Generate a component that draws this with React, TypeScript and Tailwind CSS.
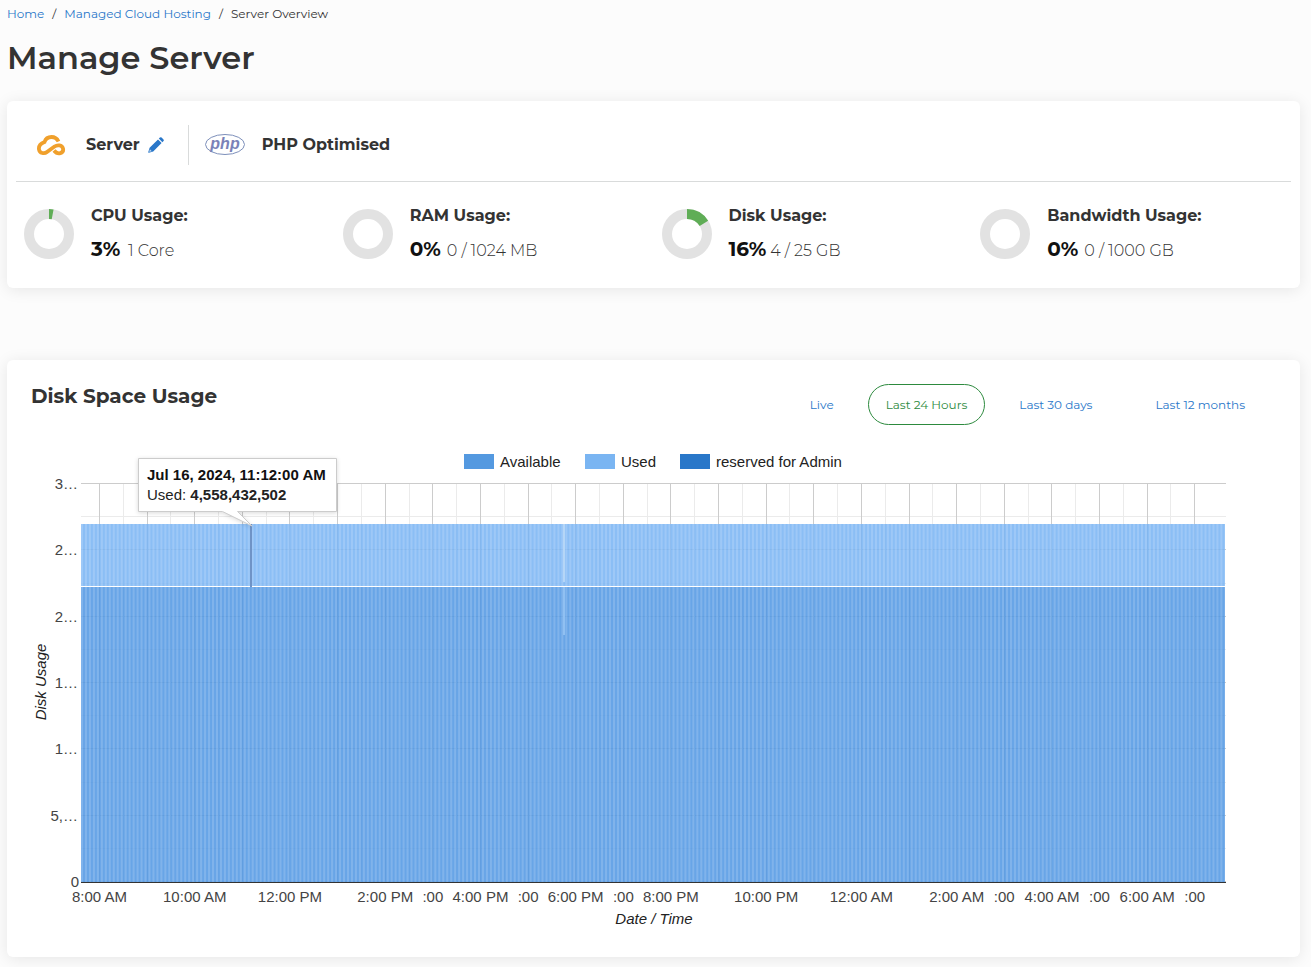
const stats = [
  { title: "CPU Usage:", percent: 3, detail: "1 Core" },
  { title: "RAM Usage:", percent: 0, detail: "0 / 1024 MB" },
  { title: "Disk Usage:", percent: 16, detail: "4 / 25 GB" },
  { title: "Bandwidth Usage:", percent: 0, detail: "0 / 1000 GB" },
]

const ranges = ["Live", "Last 24 Hours", "Last 30 days", "Last 12 months"]

const legend = [
  { label: "Available", color: "#5499e0", x: 457 },
  { label: "Used", color: "#7ab5f2", x: 578 },
  { label: "reserved for Admin", color: "#2977c9", x: 673 },
]

const yLabels = ["3…", "2…", "2…", "1…", "1…", "5,…", "0"]

// one entry per hour, starting at 8:00 AM
const hours = [
  "8:00 AM", "", "10:00 AM", "", "12:00 PM", "", "2:00 PM", ":00", "4:00 PM", ":00", "6:00 PM", ":00",
  "8:00 PM", "", "10:00 PM", "", "12:00 AM", "", "2:00 AM", ":00", "4:00 AM", ":00", "6:00 AM", ":00",
]

const LEFT = 74
const RIGHT = 1219
const TOP = 44
const BOTTOM = 442
const HOUR = 47.62
const ROW = (BOTTOM - TOP) / 6

function Donut({ percent }: { percent: number }) {
  return (
    <svg viewBox="0 0 50 50" className="size-[50px] shrink-0">
      <circle cx="25" cy="25" r="20" fill="none" stroke="#e2e2e2" strokeWidth="10" />
      {percent > 0 && (
        <circle
          cx="25"
          cy="25"
          r="20"
          fill="none"
          stroke="#5fad56"
          strokeWidth="10"
          pathLength="100"
          strokeDasharray={`${percent} 100`}
          transform="rotate(-90 25 25)"
        />
      )}
    </svg>
  )
}

function DiskChart() {
  return (
    <svg
      viewBox="0 0 1293 500"
      className="mt-[15px] block w-full font-['Liberation_Sans',Arial,sans-serif] text-[15px]"
      role="img"
      aria-label="Disk Space Usage"
    >
      <defs>
        <pattern id="bars" width="3.97" height="10" patternUnits="userSpaceOnUse" x={LEFT}>
          <rect width="2" height="10" fill="#ffffff" opacity="0.16" />
        </pattern>
      </defs>

      {legend.map((item) => (
        <g key={item.label}>
          <rect x={item.x} y="14" width="30" height="15" fill={item.color} />
          <text x={item.x + 36} y="27" fill="#222222">{item.label}</text>
        </g>
      ))}

      {yLabels.map((label, i) => (
        <g key={i}>
          <rect x={LEFT} y={Math.round(TOP + i * ROW) - 1} width={RIGHT - LEFT} height="1" fill="#cccccc" />
          {i < 6 && <rect x={LEFT} y={Math.round(TOP + (i + 0.5) * ROW) - 1} width={RIGHT - LEFT} height="1" fill="#ebebeb" />}
          <text x={i === 6 ? 72 : 71} y={Math.round(TOP + i * ROW) + 5} textAnchor="end" fill="#444444">{label}</text>
        </g>
      ))}

      {hours.map((label, i) => (
        <g key={i}>
          <rect x={Math.round(92 + i * HOUR)} y={TOP} width="1" height={BOTTOM - TOP} fill="#cccccc" />
          {i < 23 && <rect x={Math.round(92 + (i + 0.5) * HOUR)} y={TOP} width="1" height={BOTTOM - TOP} fill="#ebebeb" />}
          <text x={92.5 + i * HOUR} y="462" textAnchor="middle" fill="#444444">{label}</text>
        </g>
      ))}

      {/* used on top of available, the grid shines through */}
      <rect x={LEFT} y="84" width="1144" height="62" fill="#77b3f3" opacity="0.85" />
      <rect x={LEFT} y="147" width="1144" height="295" fill="#4e95e3" opacity="0.85" />
      <rect x={LEFT} y="84" width="1144" height="358" fill="url(#bars)" />
      <rect x={LEFT} y="146" width="1144" height="1" fill="#ffffff" />
      <rect x="556" y="84" width="2" height="58" fill="#b5d6f7" />
      <rect x="556" y="147" width="2" height="48" fill="#90c0f2" />
      <rect x="243" y="84" width="2" height="63" fill="#6f93c6" />
      <rect x={LEFT} y="442" width={RIGHT - LEFT} height="1" fill="#333333" />

      <path
        className="drop-shadow-sm"
        d="M131.500 18.500H329.500V71.500H230.500L245 86L215.500 71.500H131.500Z"
        fill="#ffffff"
        stroke="#cccccc"
      />
      <text x="140" y="40" fontWeight="bold" fill="#111111">Jul 16, 2024, 11:12:00 AM</text>
      <text x="140" y="60" fill="#222222">
        Used: <tspan fontWeight="bold">4,558,432,502</tspan>
      </text>

      <text transform="translate(39 242) rotate(-90)" textAnchor="middle" fontStyle="italic" fill="#222222">Disk Usage</text>
      <text x="647" y="484" textAnchor="middle" fontStyle="italic" fill="#222222">Date / Time</text>
    </svg>
  )
}

export default function App() {
  return (
    <div className="min-h-screen bg-[#fcfcfc] pr-[11px] pb-[10px] pl-[7px] font-['Montserrat',Inter,sans-serif] text-[#333333]">
      <nav aria-label="Breadcrumb" className="flex gap-2 pt-1 text-xs leading-5">
        <a href="#" className="text-[#2977c9]">Home</a>
        <span>/</span>
        <a href="#" className="text-[#2977c9]">Managed Cloud Hosting</a>
        <span>/</span>
        <span>Server Overview</span>
      </nav>
      <h1 className="mt-3 text-[32px] leading-[44px] font-semibold">Manage Server</h1>

      <section className="mt-[21px] rounded-md bg-white px-[9px] shadow-[0_2px_16px_rgba(0,0,0,0.09)]">
        <div className="flex h-[81px] items-center border-b border-[#d9dbdb] pt-2 pl-5">
          <svg viewBox="0 0 30 22" className="h-[22px] w-[30px]" fill="none" stroke="#f0a02c" strokeWidth="3.8">
            <path d="M22.500 7.500C21 4.500 18.500 3 15.500 3C11.500 3 9.500 5 8.500 8C4.500 9.500 2.500 12 3 15.500C3.500 19.500 8.500 20 11 18L18.500 12.500C21.500 10.500 26 11 27 14.500C28 19 22 21.500 18 16.500" />
          </svg>
          <span className="ml-5 leading-7 font-bold">Server</span>
          <button type="button" aria-label="Rename server" className="ml-2 text-[#2977c9]">
            <svg viewBox="0 0 16 16" className="size-4" fill="currentColor">
              <path d="M10.800 1.600L11.900 0.500Q12.700 -0.200 13.600 0.600L15.500 2.500Q16.200 3.300 15.500 4.100L14.400 5.200Z" />
              <path d="M10 2.400L13.600 6L5.200 14.400L0.900 15.700Q0 15.900 0.300 15L1.600 10.800Z" />
              <path d="M1.900 12.300L3.800 14.200L1.600 14.800L1.200 14.400Z" fill="#ffffff" opacity="0.7" />
            </svg>
          </button>
          <div className="ml-6 h-10 w-px bg-[#d9dbdb]" />
          <svg viewBox="0 0 40 22" className="ml-4 h-[22px] w-10" role="img" aria-label="PHP">
            <ellipse cx="20" cy="10.500" rx="19.500" ry="10" fill="#ffffff" stroke="#7d8fba" />
            <text
              x="20"
              y="15"
              textAnchor="middle"
              fontSize="16"
              fontStyle="italic"
              fontWeight="bold"
              fill="#7a82b8"
              fontFamily="Liberation Sans"
            >
              php
            </text>
          </svg>
          <span className="ml-[17px] leading-7 font-bold">PHP Optimised</span>
        </div>
        <div className="grid grid-cols-4">
          {stats.map((stat) => (
            <div key={stat.title} className="flex items-center gap-[17px] pt-5 pb-[22px] pl-2">
              <Donut percent={stat.percent} />
              <div>
                <h2 className="leading-7 font-bold">{stat.title}</h2>
                <p className="mt-1 flex items-baseline gap-1 leading-[30px]">
                  <strong className="min-w-[33px] text-xl leading-[30px] font-bold text-[#111111]">{stat.percent}%</strong>
                  <span className="font-light">{stat.detail}</span>
                </p>
              </div>
            </div>
          ))}
        </div>
      </section>

      <section className="mt-[72px] rounded-md bg-white pb-[17px] shadow-[0_2px_16px_rgba(0,0,0,0.09)]">
        <div className="flex items-start justify-between pt-6 pr-[38px] pl-6">
          <h2 className="text-xl leading-6 font-bold">Disk Space Usage</h2>
          <div className="flex gap-[17px]">
            {ranges.map((range) => (
              <button
                key={range}
                type="button"
                className={
                  range === "Last 24 Hours"
                    ? "h-[41px] rounded-full border border-[#2d8a3e] px-[17px] text-xs text-[#2d8a3e]"
                    : "h-[41px] px-[17px] text-xs text-[#2977c9] last:ml-3"
                }
              >
                {range}
              </button>
            ))}
          </div>
        </div>
        <DiskChart />
      </section>
    </div>
  )
}
